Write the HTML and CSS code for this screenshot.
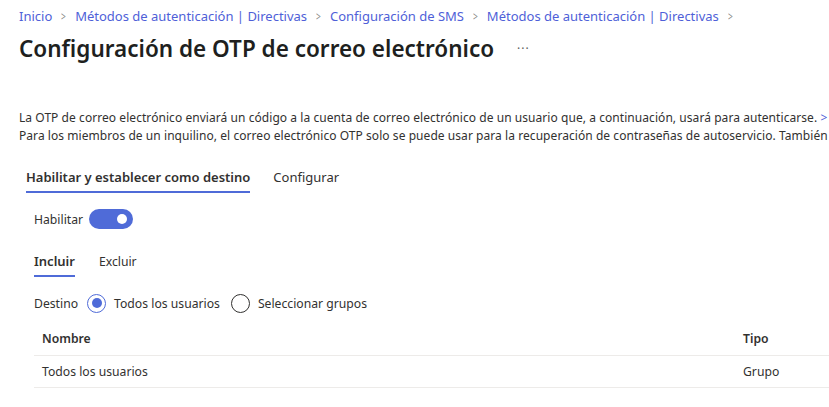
FILE: index.html
```html
<!DOCTYPE html>
<html lang="es">
<head>
<meta charset="utf-8">
<link rel="stylesheet" href="styles.css">
</head>
<body>
<div class="page">
  <nav class="crumbs">
    <a>Inicio</a><span class="sep">&gt;</span>
    <a>Métodos de autenticación | Directivas</a><span class="sep">&gt;</span>
    <a>Configuración de SMS</a><span class="sep">&gt;</span>
    <a>Métodos de autenticación | Directivas</a><span class="sep">&gt;</span>
  </nav>
  <header class="title-row">
    <h1 class="title">Configuración de OTP de correo electrónico</h1>
    <span class="more">···</span>
  </header>
  <div class="desc">
    <p>La OTP de correo electrónico enviará un código a la cuenta de correo electrónico de un usuario que, a continuación, usará para autenticarse. <a class="link">&gt;</a></p>
    <p>Para los miembros de un inquilino, el correo electrónico OTP solo se puede usar para la recuperación de contraseñas de autoservicio. También</p>
  </div>
  <div class="tabs main-tabs">
    <div class="tab active">Habilitar y establecer como destino</div>
    <div class="tab">Configurar</div>
  </div>
  <div class="content">
    <div class="enable-row">
      <span>Habilitar</span>
      <span class="toggle"><span class="knob"></span></span>
    </div>
    <div class="tabs sub-tabs">
      <div class="tab active">Incluir</div>
      <div class="tab">Excluir</div>
    </div>
    <div class="target-row">
      <span class="lbl">Destino</span>
      <label class="radio"><span class="dot checked"></span>Todos los usuarios</label>
      <label class="radio"><span class="dot"></span>Seleccionar grupos</label>
    </div>
    <div class="table">
      <div class="row head">
        <div class="c-name">Nombre</div>
        <div class="c-type">Tipo</div>
      </div>
      <div class="row">
        <div class="c-name">Todos los usuarios</div>
        <div class="c-type">Grupo</div>
      </div>
    </div>
  </div>
</div>
</body>
</html>
```
FILE: styles.css
```css
html, body {
  margin: 0;
  padding: 0;
  background: #ffffff;
  overflow: hidden;
}
body {
  font-family: "Noto Sans", "Open Sans", sans-serif;
  color: #323130;
  font-size: 12.2px;
  width: 829px;
  height: 407px;
}
.page {
  padding-left: 19px;
  white-space: nowrap;
}
.crumbs {
  display: flex;
  align-items: center;
  height: 20px;
  margin-top: 6px;
  font-size: 13px;
}
.crumbs a {
  color: #4f5fd8;
}
.crumbs .sep {
  color: #8a8886;
  margin: 0 8px;
  font-size: 12px;
  transform: scaleX(0.7);
  display: inline-block;
}
.title-row {
  display: flex;
  align-items: center;
  height: 32px;
  margin-top: 6px;
}
.title {
  margin: 0;
  font-size: 22.5px;
  font-weight: 600;
  color: #201f1e;
}
.more {
  margin-left: 23px;
  font-size: 12px;
  color: #605e5c;
  letter-spacing: 1px;
}
.desc {
  margin-top: 45px;
  font-size: 12px;
  line-height: 18px;
  letter-spacing: 0.06px;
}
.desc p {
  margin: 0;
}
.desc .link {
  color: #4f5fd8;
}
.tabs {
  display: flex;
}
.tab {
  position: relative;
  height: 32px;
  display: flex;
  align-items: center;
}
.tab.active {
  font-weight: 600;
  font-size: 13px;
}
.tab.active::after {
  content: "";
  position: absolute;
  left: 0;
  right: 0;
  bottom: 0;
  height: 2px;
  background: #4f6bd8;
}
.main-tabs {
  margin-top: 16px;
  margin-left: 7px;
  font-size: 13px;
  gap: 23px;
}
.content {
  padding-left: 15px;
}
.enable-row {
  display: flex;
  align-items: center;
  margin-top: 16px;
  height: 20px;
  gap: 6px;
}
.toggle {
  width: 44px;
  height: 20px;
  border-radius: 10px;
  background: #4f6bd8;
  display: flex;
  align-items: center;
  justify-content: flex-end;
  padding-right: 6px;
  box-sizing: border-box;
}
.knob {
  width: 10px;
  height: 10px;
  border-radius: 50%;
  background: #fff;
}
.sub-tabs {
  margin-top: 16px;
  gap: 24px;
}
.target-row {
  display: flex;
  align-items: center;
  margin-top: 16px;
  height: 20px;
}
.target-row .lbl {
  margin-right: 9px;
}
.radio {
  display: flex;
  align-items: center;
  margin-right: 11px;
}
.dot {
  width: 19px;
  height: 19px;
  border: 1px solid #323130;
  border-radius: 50%;
  box-sizing: border-box;
  margin-right: 8px;
  display: flex;
  align-items: center;
  justify-content: center;
}
.dot.checked {
  border-color: #4f6bd8;
}
.dot.checked::after {
  content: "";
  width: 10px;
  height: 10px;
  border-radius: 50%;
  background: #4f6bd8;
}
.table {
  margin-top: 9px;
}
.row {
  display: flex;
  align-items: center;
  height: 31px;
  border-bottom: 1px solid #edebe9;
}
.row.head {
  height: 33px;
}
.row.head > div {
  font-weight: 600;
}
.c-name {
  padding-left: 8px;
  width: 701px;
}
```
